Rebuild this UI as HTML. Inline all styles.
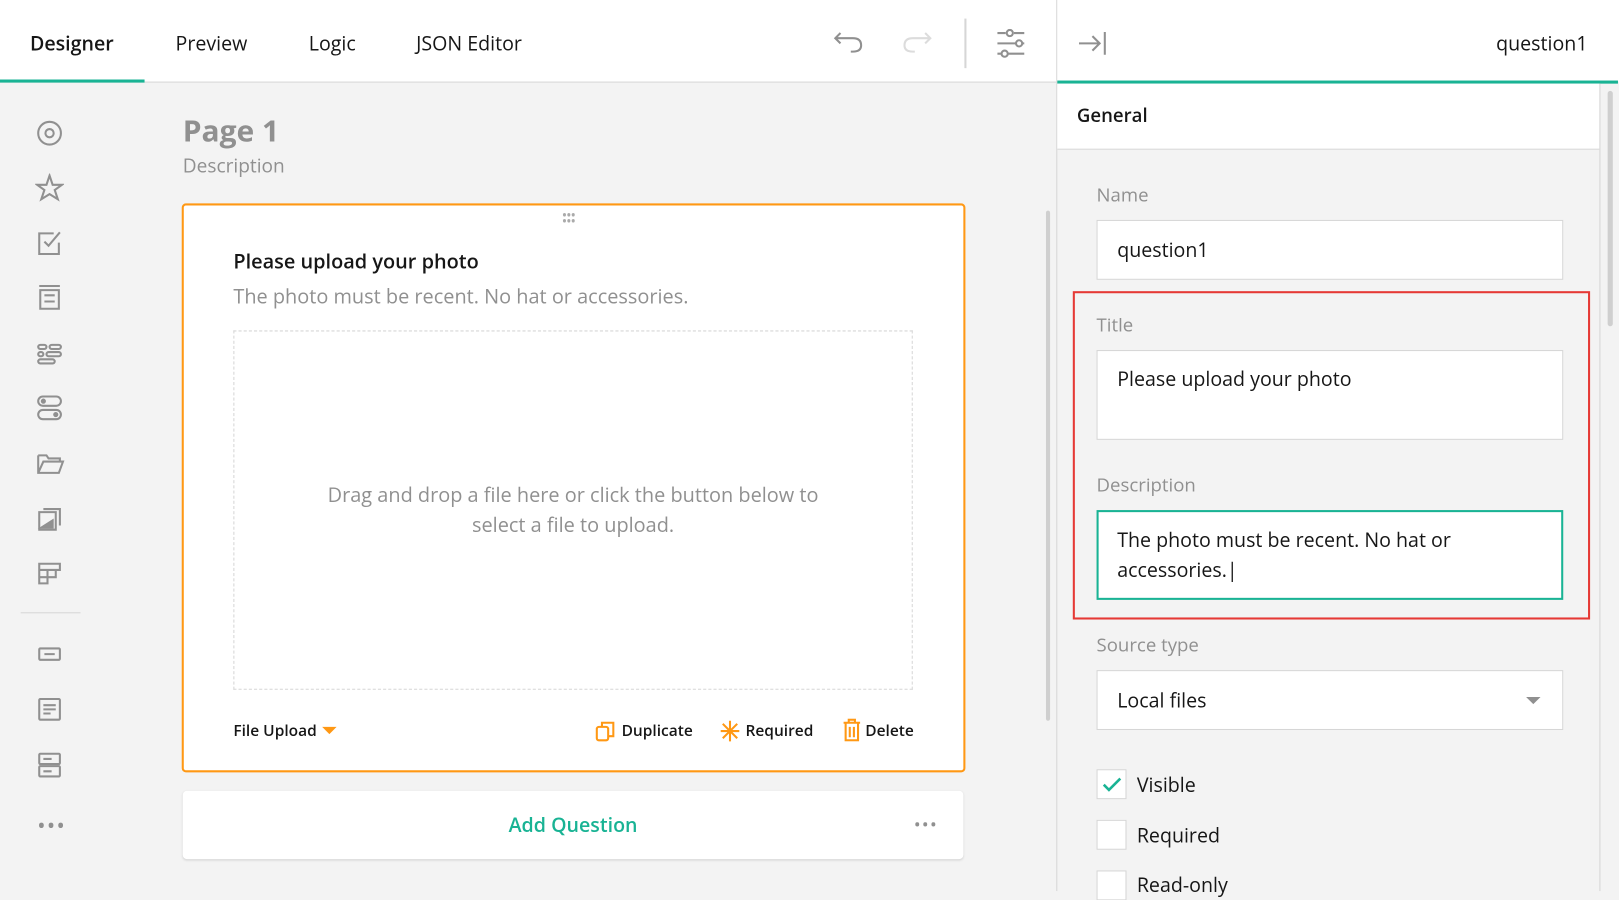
<!DOCTYPE html>
<html><head><meta charset="utf-8"><style>
*{box-sizing:border-box;margin:0;padding:0}
html,body{width:1619px;height:891px;overflow:hidden;background:#f3f3f3}
#w{position:absolute;left:0;top:0;width:1568px;height:863px;transform:scale(1.03253);transform-origin:0 0;font-family:"Open Sans","Liberation Sans",sans-serif;color:#161616}
.a{position:absolute}
.top{left:0;top:0;width:1023px;height:80px;background:#fff;border-bottom:1px solid #d6d6d6}
.tab{position:absolute;top:29px;font-size:19px;color:#161616}
svg{position:absolute;fill:none;stroke:#909090;stroke-width:2}
.lbl{font-size:18px;color:#909090;position:absolute}
.inp{position:absolute;background:#fff;border:1px solid #d6d6d6;font-size:19px;padding:0 19px}
.cb{position:absolute;left:1062px;width:29px;height:29px;background:#fff;border:1px solid #d6d6d6}
.cbl{position:absolute;left:1101px;font-size:19px}
</style></head><body><div id="w">
<div class="a top"></div>
<div class="tab" style="left:29px;font-weight:600">Designer</div>
<div class="a" style="left:0;top:77px;width:140px;height:3px;background:#19b394"></div>
<div class="tab" style="left:170px">Preview</div>
<div class="tab" style="left:299px">Logic</div>
<div class="tab" style="left:403px">JSON Editor</div>
<svg style="left:806px;top:28px" width="32" height="26" viewBox="0 0 32 26"><path d="M8 4 L3 9 L8 14 M3 9 H20 Q28 9 28 16 Q28 22 20 22 H18"/></svg>
<svg style="left:872px;top:28px;stroke:#dcdcdc" width="32" height="26" viewBox="0 0 32 26"><path d="M24 4 L29 9 L24 14 M29 9 H12 Q4 9 4 16 Q4 22 12 22 H14"/></svg>
<div class="a" style="left:934px;top:18px;width:2px;height:48px;background:#d6d6d6"></div>
<svg style="left:964px;top:28px" width="30" height="28" viewBox="0 0 30 28"><path d="M2 4H10M18 4H28M2 14H20M26 14H28M2 24H6M12 24H28"/><circle cx="14" cy="4" r="3"/><circle cx="23" cy="14" r="3"/><circle cx="9" cy="24" r="3"/></svg>
<div class="a" style="left:1023px;top:0;width:545px;height:863px;background:#f3f3f3;border-left:1px solid #d6d6d6"></div>
<div class="a" style="left:1024px;top:0;width:544px;height:79px;background:#fff"></div>
<div class="a" style="left:1024px;top:78px;width:543px;height:3px;background:#19b394"></div>
<svg style="left:1043px;top:30px" width="30" height="24" viewBox="0 0 30 24"><path d="M2 12H22M15 5L22 12L15 19M27 1V23"/></svg>
<div class="a" style="left:1449px;top:29px;font-size:19px;color:#161616">question1</div>
<div class="a" style="left:1024px;top:81px;width:525px;height:64px;background:#fff;border-bottom:1px solid #d6d6d6"></div>
<div class="a" style="left:1043px;top:100px;font-size:18px;font-weight:600">General</div>
<div class="a" style="left:1549px;top:81px;width:1px;height:782px;background:#d6d6d6"></div>
<div class="a" style="left:1557px;top:88px;width:5px;height:228px;background:#cfcfcf;border-radius:3px"></div>
<div class="lbl" style="left:1062px;top:177px">Name</div>
<div class="inp" style="left:1062px;top:213px;width:452px;height:58px;line-height:56px">question1</div>
<div class="a" style="left:1039px;top:282px;width:501px;height:318px;border:2px solid #e53935"></div>
<div class="lbl" style="left:1062px;top:303px">Title</div>
<div class="inp" style="left:1062px;top:339px;width:452px;height:87px;padding-top:14px;line-height:26px">Please upload your photo</div>
<div class="lbl" style="left:1062px;top:458px">Description</div>
<div class="inp" style="left:1062px;top:494px;width:452px;height:87px;padding-top:13px;line-height:29px;border:2px solid #19b394;padding-left:18px">The photo must be recent. No hat or accessories.|</div>
<div class="lbl" style="left:1062px;top:613px">Source type</div>
<div class="inp" style="left:1062px;top:649px;width:452px;height:58px;line-height:56px">Local files</div>
<div class="a" style="left:1478px;top:675px;border-left:7px solid transparent;border-right:7px solid transparent;border-top:7px solid #909090"></div>
<div class="cb" style="top:745px"></div>
<svg style="left:1067px;top:752px;stroke:#19b394;stroke-width:2.5" width="20" height="16" viewBox="0 0 20 16"><path d="M2 8L7 13L18 2"/></svg>
<div class="cbl" style="top:747px">Visible</div>
<div class="cb" style="top:794px"></div>
<div class="cbl" style="top:796px">Required</div>
<div class="cb" style="top:843px"></div>
<div class="cbl" style="top:844px">Read-only</div>
<svg style="left:34px;top:115px" width="28" height="28" viewBox="0 0 28 28"><circle cx="14" cy="14" r="11"/><circle cx="14" cy="14" r="4"/></svg>
<svg style="left:34px;top:168px" width="28" height="28" viewBox="0 0 28 28"><path d="M14 2L17 11H26L19 16L22 25L14 20L6 25L9 16L2 11H11Z"/></svg>
<svg style="left:34px;top:221px" width="28" height="28" viewBox="0 0 28 28"><path d="M23 14V25H4V5H18M9 13L13 17L24 4"/></svg>
<svg style="left:34px;top:274px" width="28" height="28" viewBox="0 0 28 28"><path d="M4 3H24M5 7H23V25H5ZM9 12H19M9 18H19"/></svg>
<svg style="left:34px;top:328px" width="28" height="28" viewBox="0 0 28 28"><rect x="3" y="6" width="8" height="4" rx="2"/><rect x="14" y="6" width="11" height="4" rx="2"/><rect x="3" y="13" width="5" height="4" rx="2"/><rect x="11" y="13" width="14" height="4" rx="2"/><rect x="3" y="20" width="16" height="4" rx="2"/></svg>
<svg style="left:34px;top:381px" width="28" height="28" viewBox="0 0 28 28"><rect x="3" y="3" width="22" height="9" rx="4.5"/><rect x="3" y="16" width="22" height="9" rx="4.5"/><circle cx="8" cy="7.5" r="1.5" fill="#909090"/><circle cx="20" cy="20.5" r="1.5" fill="#909090"/></svg>
<svg style="left:34px;top:435px" width="30" height="28" viewBox="0 0 30 28"><path d="M3 6H11L13 9H24V12M3 6V23H23L27 12H8L3 23"/></svg>
<svg style="left:34px;top:488px" width="28" height="28" viewBox="0 0 28 28"><path d="M8 5H24V21M4 8H20V25H4Z"/><path d="M6 23L17 16V23Z" fill="#909090"/></svg>
<svg style="left:34px;top:541px" width="28" height="28" viewBox="0 0 28 28"><path d="M4 5H24V11H4ZM4 11V24H12V18H4M12 11V18H20V11"/></svg>
<div class="a" style="left:20px;top:593px;width:58px;height:1px;background:#d6d6d6"></div>
<svg style="left:34px;top:620px" width="28" height="28" viewBox="0 0 28 28"><rect x="4" y="8" width="20" height="11" rx="1"/><path d="M9 13.5H19"/></svg>
<svg style="left:34px;top:673px" width="28" height="28" viewBox="0 0 28 28"><rect x="4" y="4" width="20" height="20" rx="1"/><path d="M8 10H20M8 14H20M8 18H15"/></svg>
<svg style="left:34px;top:727px" width="28" height="28" viewBox="0 0 28 28"><rect x="4" y="3" width="20" height="10" rx="1"/><rect x="4" y="15" width="20" height="10" rx="1"/><path d="M8 8H16M8 20H16"/></svg>
<div class="a" style="left:36px;top:784px;font-size:22px;color:#909090;letter-spacing:1px">•••</div>
<div class="a" style="left:1013px;top:204px;width:4px;height:494px;background:#cfcfcf;border-radius:2px"></div>
<div class="a" style="left:177px;top:107px;font-size:29px;font-weight:700;color:#909090">Page 1</div>
<div class="a" style="left:177px;top:148px;font-size:18.5px;color:#909090">Description</div>
<div class="a" style="left:176px;top:197px;width:759px;height:551px;background:#fff;border:2px solid #ff9814;border-radius:4px"></div>
<div class="a" style="left:544px;top:206px;font-size:14px;color:#aaa;line-height:6px;letter-spacing:-1px">•••<br>•••</div>
<div class="a" style="left:226px;top:239px;font-size:19.3px;font-weight:600">Please upload your photo</div>
<div class="a" style="left:226px;top:273px;font-size:19.3px;color:#909090">The photo must be recent. No hat or accessories.</div>
<div class="a" style="left:226px;top:320px;width:658px;height:348px;border:1px dashed #d6d6d6"></div>
<div class="a" style="left:226px;top:464px;width:658px;text-align:center;font-size:19.3px;color:#909090;line-height:29px">Drag and drop a file here or click the button below to<br>select a file to upload.</div>
<div class="a" style="left:226px;top:698px;font-size:15px;font-weight:600">File Upload</div>
<div class="a" style="left:312px;top:704px;border-left:7px solid transparent;border-right:7px solid transparent;border-top:7px solid #ff9814"></div>
<svg style="left:576px;top:697px;stroke:#ff9814" width="22" height="22" viewBox="0 0 22 22"><rect x="2" y="7" width="11" height="13" rx="2"/><path d="M7 7V3H18V16H13"/></svg>
<div class="a" style="left:602px;top:698px;font-size:15px;font-weight:600">Duplicate</div>
<svg style="left:696px;top:697px;stroke:#ff9814" width="22" height="22" viewBox="0 0 22 22"><path d="M11 1V21M2 11H20M4 4L18 18M18 4L4 18"/></svg>
<div class="a" style="left:722px;top:698px;font-size:15px;font-weight:600">Required</div>
<svg style="left:815px;top:696px;stroke:#ff9814" width="20" height="22" viewBox="0 0 20 22"><path d="M2 4H18M7 4V1H13V4M4 4V21H16V4M8 8V18M12 8V18"/></svg>
<div class="a" style="left:838px;top:698px;font-size:15px;font-weight:600">Delete</div>
<div class="a" style="left:177px;top:766px;width:756px;height:66px;background:#fff;border-radius:4px;box-shadow:0 1px 2px rgba(0,0,0,.12)"></div>
<div class="a" style="left:177px;top:786px;width:756px;text-align:center;font-size:19px;font-weight:600;color:#19b394">Add Question</div>
<div class="a" style="left:885px;top:787px;font-size:18px;color:#909090;letter-spacing:1px">•••</div>
</div></body></html>
